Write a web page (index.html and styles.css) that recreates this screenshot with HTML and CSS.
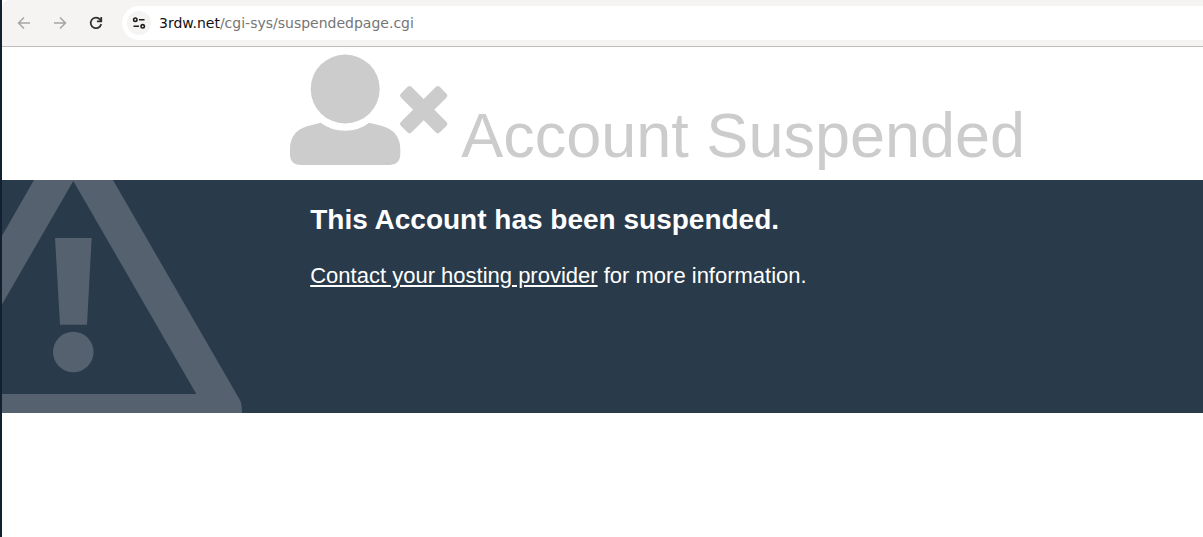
FILE: index.html
```html
<!DOCTYPE html>
<html lang="en">
<head>
<meta charset="utf-8">
<meta name="viewport" content="width=device-width, initial-scale=1">
<title>Account Suspended</title>
<link rel="stylesheet" href="styles.css">
</head>
<body>
<div class="window">
  <nav class="toolbar" aria-label="Browser">
    <button class="tool" type="button" aria-label="Back" disabled>
      <svg width="16" height="16" viewBox="0 0 16 16" fill="none" stroke="currentColor" stroke-width="1.5"><path d="M14 8H3M8 2.5 2.5 8 8 13.5"/></svg>
    </button>
    <button class="tool" type="button" aria-label="Forward" disabled>
      <svg width="16" height="16" viewBox="0 0 16 16" fill="none" stroke="currentColor" stroke-width="1.5"><path d="M2 8h11M8 2.5 13.5 8 8 13.5"/></svg>
    </button>
    <button class="tool" type="button" aria-label="Reload">
      <svg width="16" height="16" viewBox="0 0 16 16" fill="none" stroke="currentColor" stroke-width="1.7"><path d="M13.2 9A5.3 5.3 0 1 1 12 4.4L13.2 5.8M13.3 2V6.4H8.9"/></svg>
    </button>
    <div class="address">
      <button class="site-info" type="button" aria-label="View site information">
        <svg width="16" height="16" viewBox="0 0 16 16" fill="none" stroke="currentColor" stroke-width="1.6"><circle cx="4.3" cy="4.7" r="1.7"/><path d="M8 4.7h5.5M2.5 11.3H8"/><circle cx="11.7" cy="11.3" r="1.7"/></svg>
      </button>
      <div class="url" role="textbox" aria-label="Address" contenteditable="true" spellcheck="false"><span class="host">3rdw.net</span>/cgi-sys/suspendedpage.cgi</div>
    </div>
  </nav>
  <header class="heading">
    <svg class="user-icon" width="158" height="111" viewBox="0 0 158 111" fill="currentColor" aria-hidden="true">
      <circle cx="55.2" cy="35" r="34.5"/>
      <path d="M30.7 68.7Q41 76.7 55 76.7T79.3 68.7L92 72Q110 77 110.3 95V100Q110 111 99 111H11Q0 111 0 100V95Q0 77 18 72Z"/>
      <g transform="translate(133.7 55.7) rotate(45)"><rect x="-27.5" y="-7.5" width="55" height="15" rx="3"/><rect x="-7.5" y="-27.5" width="15" height="55" rx="3"/></g>
    </svg>
    <h1 class="title">Account Suspended</h1>
  </header>
  <main class="notice">
    <svg class="warning" width="240" height="233" viewBox="0 0 240 233" fill="currentColor" aria-hidden="true">
      <path fill-rule="evenodd" d="M-68 233V174L32 0H111L238.5 221Q240 225 240 233ZM71.3 1-51.7 214H194.3Z"/>
      <path d="M53 58H89.7L85 144.7H58Z"/>
      <circle cx="71.3" cy="172" r="20.3"/>
    </svg>
    <h2 class="reason">This Account has been suspended.</h2>
    <p class="advice"><a class="contact" href="#contact">Contact your hosting provider</a> for more information.</p>
  </main>
</div>
</body>
</html>
```
FILE: styles.css
```css
body {
  margin: 0;
  background: #fff;
  font-family: "Liberation Sans", Arial, sans-serif;
}

.window {
  box-sizing: border-box;
  min-height: 100vh;
  border-left: 2px solid #12202f;
}

.toolbar {
  display: flex;
  align-items: center;
  gap: 12px;
  padding: 6px 0 6px 10px;
  border-bottom: 1px solid #bdbdbd;
  border-top-left-radius: 8px;
  background: #f5f4f3;
}

.tool,
.site-info {
  display: grid;
  place-items: center;
  width: 24px;
  height: 24px;
  padding: 0;
  border: 0;
  border-radius: 50%;
  background: none;
  color: #303030;
}

.tool:disabled {
  color: #a6a5a4;
}

.address {
  display: flex;
  flex: 1;
  align-items: center;
  gap: 8px;
  height: 34px;
  margin-left: 2px;
  padding-left: 5px;
  border-radius: 17px 0 0 17px;
  background: #fff;
}

.site-info {
  background: #f5f4f3;
  color: #1f1f1f;
}

.url {
  flex: 1;
  color: #757575;
  font: 14px/20px "DejaVu Sans", sans-serif;
  white-space: nowrap;
}

.host {
  color: #111;
}

.heading {
  display: flex;
  align-items: flex-end;
  gap: 13px;
  padding: 7px 0 15px 24%;
  color: #ccc;
}

.user-icon {
  flex: none;
}

.title {
  margin: 0;
  font-size: 63px;
  font-weight: 400;
  line-height: 60px;
}

.notice {
  position: relative;
  box-sizing: border-box;
  min-height: 233px;
  padding: 22px 20px 20px calc(24% + 20px);
  overflow: hidden;
  background: #293a4a;
  color: #fff;
}

.warning {
  position: absolute;
  bottom: 0;
  left: 0;
  color: #55616e;
}

.reason {
  margin: 0 0 24px;
  font-size: 28px;
  line-height: 36px;
}

.advice {
  margin: 0;
  font-size: 22px;
  line-height: 28px;
}

.contact {
  color: inherit;
}
```
